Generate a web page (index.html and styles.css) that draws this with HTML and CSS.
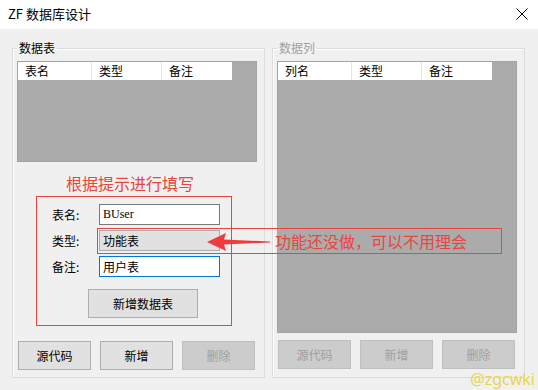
FILE: index.html
```html
<!DOCTYPE html>
<html>
  <head>
    <meta charset="utf-8">
    <title>ZF 数据库设计</title>
    <link rel="stylesheet" href="styles.css">
  </head>
  <body>
    <div class="window">
      <div class="titlebar">
        <span class="title">ZF 数据库设计</span>
        <svg class="close" width="12" height="12" viewBox="0 0 12 12">
          <path d="M0.5 0.5 L11.5 11.5 M11.5 0.5 L0.5 11.5" stroke="#000" stroke-width="1" fill="none"/>
        </svg>
      </div>

      <div class="client">
        <fieldset class="group">
          <legend>数据表</legend>
          <div class="listview short">
            <div class="header">
              <span class="col c1">表名</span>
              <span class="col c2">类型</span>
              <span class="col c3">备注</span>
            </div>
          </div>

          <div class="hint">根据提示进行填写</div>

          <div class="form-box">
            <div class="row">
              <span class="label">表名:</span>
              <div class="field mono">BUser</div>
            </div>
            <div class="row">
              <span class="label">类型:</span>
              <div class="field combo">功能表</div>
            </div>
            <div class="row">
              <span class="label">备注:</span>
              <div class="field focused">用户表</div>
            </div>
            <div class="btn wide">新增数据表</div>
          </div>

          <div class="actions">
            <div class="btn">源代码</div>
            <div class="btn">新增</div>
            <div class="btn disabled">删除</div>
          </div>
        </fieldset>

        <fieldset class="group off">
          <legend>数据列</legend>
          <div class="listview tall">
            <div class="header">
              <span class="col c1">列名</span>
              <span class="col c2">类型</span>
              <span class="col c3">备注</span>
            </div>
          </div>

          <div class="actions">
            <div class="btn disabled">源代码</div>
            <div class="btn disabled">新增</div>
            <div class="btn disabled">删除</div>
          </div>
        </fieldset>
      </div>

      <!-- red markup drawn over the dialog -->
      <div class="note">
        <svg class="arrow" width="64" height="20" viewBox="0 0 64 20">
          <polygon points="0,10 19,1 17,7.5 63,9.5 63,10.5 17,12.5 19,19" fill="#ef3b3b"/>
        </svg>
        <span class="note-text">功能还没做，可以不用理会</span>
      </div>

      <div class="watermark">@zgcwki</div>
    </div>
  </body>
</html>
```

FILE: styles.css
```css
body, html {
  margin: 0;
  padding: 0;
}
body {
  font-family: "Noto Sans CJK SC", "Noto Sans", sans-serif;
  font-size: 12px;
  color: #000;
}
.window {
  position: relative;
  width: 538px;
  height: 390px;
  background: #f0f0f0;
  overflow: hidden;
}
.titlebar {
  height: 29px;
  background: #fff;
  display: flex;
  align-items: center;
  justify-content: space-between;
  padding: 0 10px 2px 8px;
  box-sizing: border-box;
}
.title {
  font-size: 13px;
  line-height: 16px;
}
.close {
  margin-top: 1px;
}

.client {
  display: flex;
  gap: 7px;
  padding: 12px 0 0 12px;
}
.group {
  margin: 0;
  width: 253px;
  box-sizing: border-box;
  border: 1px solid #dcdcdc;
  box-shadow: inset 1px 1px 0 #fff;
  padding: 6px 7px 7px 4px;
  min-width: 0;
}
.group legend {
  margin-left: 0;
  padding: 0 2px;
  font-size: 12px;
  line-height: 14px;
}
.group.off legend {
  color: #a0a0a0;
}

.listview {
  width: 240px;
  background: #ababab;
  border: 1px solid #a3a3a3;
  box-sizing: border-box;
}
.listview.short {
  height: 101px;
}
.listview.tall {
  height: 272px;
}
.header {
  display: flex;
  width: 214px;
  height: 18px;
  background: #fff;
}
.col {
  line-height: 18px;
  padding-left: 7px;
  box-sizing: border-box;
  border-right: 1px solid #e5e5e5;
}
.c1 { width: 74px; }
.c2 { width: 70px; }
.c3 { width: 70px; border-right: 0; }

.hint {
  margin: 10px 0 0 49px;
  font-size: 16px;
  line-height: 22px;
  color: #e8453f;
}
.form-box {
  margin: 2px 0 0 19px;
  width: 196px;
  height: 130px;
  box-sizing: border-box;
  border: 1px solid #e8453f;
  padding: 7px 0 0 15px;
  display: flex;
  flex-direction: column;
  gap: 5px;
}
.row {
  display: flex;
  align-items: center;
  height: 21px;
}
.label {
  width: 47px;
}
.field {
  width: 121px;
  height: 21px;
  box-sizing: border-box;
  border: 1px solid #7a7a7a;
  background: #fff;
  padding-left: 3px;
  line-height: 19px;
}
.field.mono {
  font-family: "Liberation Serif", serif;
  font-size: 12px;
}
.field.combo {
  background: #e1e1e1;
  border-color: #adadad;
}
.field.focused {
  border-color: #0078d7;
}

.btn {
  width: 73px;
  height: 29px;
  box-sizing: border-box;
  background: #e1e1e1;
  border: 1px solid #adadad;
  display: flex;
  align-items: center;
  justify-content: center;
}
.btn.wide {
  width: 110px;
  margin: 7px 0 0 36px;
}
.btn.disabled {
  background: #cccccc;
  border-color: #bfbfbf;
  color: #a0a0a0;
}
.actions {
  display: flex;
  gap: 9px;
  margin: 15px 0 0 1px;
}
.group.off .actions {
  margin-top: 7px;
}

.note {
  position: absolute;
  left: 97px;
  top: 228px;
  width: 405px;
  height: 26px;
  box-sizing: border-box;
  border: 1px solid #e8453f;
  display: flex;
  align-items: center;
  padding-left: 109px;
  gap: 4px;
}
.arrow {
  flex: none;
  margin-top: 1px;
}
.note-text {
  font-size: 16px;
  line-height: 20px;
  color: #e8453f;
}
.watermark {
  position: absolute;
  right: 3px;
  bottom: 1px;
  font-family: "Noto Sans", sans-serif;
  font-size: 16px;
  line-height: 20px;
  color: #ead64c;
}
```
